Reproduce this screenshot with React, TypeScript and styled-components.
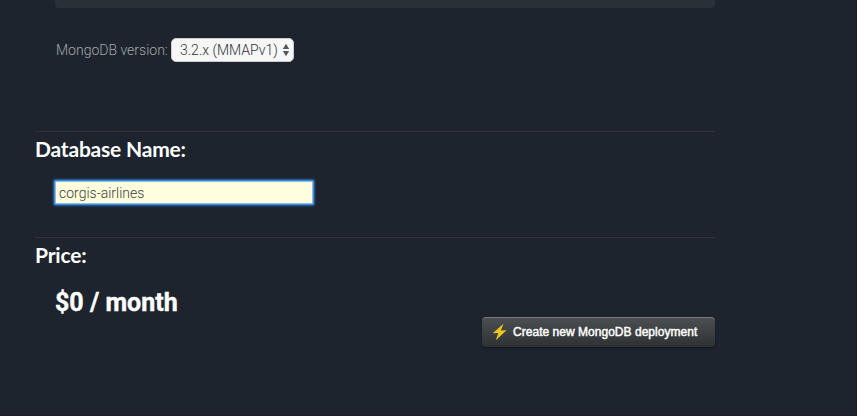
import React, { useState } from "react";
import styled, { createGlobalStyle } from "styled-components";

const GlobalStyle = createGlobalStyle`
  * { box-sizing: border-box; }
  body {
    margin: 0;
    background: #1d242d;
    font-family: Roboto, "Liberation Sans", sans-serif;
    overflow: hidden;
  }
`;

const Page = styled.main`
  height: 416px;
  width: 857px;
  padding-left: 35px;
  background: #1d242d;
  border-right: 1px solid #1b1e28;
  border-bottom: 1px solid #1b1e28;
`;

const Column = styled.form`
  width: 680px;
  display: flex;
  flex-direction: column;
`;

const PlanPanel = styled.div`
  height: 8px;
  margin-left: 20px;
  background: #293037;
  border-radius: 0 0 4px 4px;
`;

const VersionRow = styled.div`
  display: flex;
  align-items: center;
  height: 24px;
  margin: 30px 0 69px 21px;
`;

const VersionLabel = styled.label`
  width: 115px;
  color: #a0a8ac;
  font-size: 14px;
  font-weight: 300;
  line-height: 24px;
  white-space: nowrap;
`;

const VersionSelect = styled.button`
  display: flex;
  align-items: center;
  justify-content: space-between;
  width: 123px;
  height: 24px;
  padding: 0 3px 0 8px;
  border: 1px solid #c9cbcc;
  border-radius: 5px;
  background: #f7f7f7;
  color: #303336;
  font-family: inherit;
  font-size: 14px;
  font-weight: 300;
  line-height: 22px;
  white-space: nowrap;
`;

const Section = styled.section<{ $height: number }>`
  height: ${(p) => p.$height}px;
  border-top: 1px solid #30353a;
`;

const Heading = styled.h3`
  margin: 4px 0 0;
  color: #fff;
  font-family: Lato, sans-serif;
  font-size: 21px;
  font-weight: 700;
  line-height: 26px;
  letter-spacing: -0.2px;
`;

const NameInput = styled.input`
  display: block;
  width: 258px;
  height: 23px;
  margin: 19px 0 0 20px;
  padding: 0 4px 0 3px;
  border: 1px solid #8fbde8;
  border-radius: 1px;
  outline: none;
  background: #ffffdf;
  box-shadow: 0 0 1px 1px #438fdd, 0 0 2px 2px #28629f;
  color: #3c3c39;
  font-family: inherit;
  font-size: 14px;
  font-weight: 300;
`;

const Amount = styled.p`
  margin: 19px 0 0 20px;
  color: #fff;
  font-size: 25px;
  font-weight: 700;
  line-height: 32px;
  -webkit-text-stroke: 0.4px #fff;
`;

const CreateButton = styled.button`
  display: flex;
  align-items: center;
  align-self: flex-end;
  width: 233px;
  height: 30px;
  padding: 0 0 1px 10px;
  gap: 6px;
  border: 0;
  border-top: 1px solid #777b7e;
  border-radius: 4px;
  background: linear-gradient(#4b4f52, #2e3133);
  box-shadow: 0 1px 2px rgba(0, 0, 0, 0.4);
  color: #fff;
  font-family: "Liberation Sans", Arial, sans-serif;
  font-size: 12px;
  font-weight: 400;
  letter-spacing: 0.03px;
  -webkit-text-stroke: 0.45px #fff;
  white-space: nowrap;
`;

const StepArrows = () => (
  <svg width="8" height="14" viewBox="0 0 8 14" fill="#55585b" aria-hidden="true">
    <path d="M4 0.7 7.2 5.9H0.8ZM0.8 8.1H7.2L4 13.3Z" />
  </svg>
);

const Bolt = () => (
  <svg width="15" height="18" viewBox="0 0 15 18" fill="#edc51c" aria-hidden="true">
    <path d="M11.5 0.7 0.7 10.2 6.3 9.9 3.8 17.2 14.6 7.3 8.9 7.5Z" />
  </svg>
);

export default function App() {
  const [name, setName] = useState("corgis-airlines");
  return (
    <>
      <GlobalStyle />
      <Page>
        <Column onSubmit={(e) => e.preventDefault()}>
          <PlanPanel />
          <VersionRow>
            <VersionLabel htmlFor="version">MongoDB version:</VersionLabel>
            <VersionSelect id="version" type="button">
              3.2.x (MMAPv1)
              <StepArrows />
            </VersionSelect>
          </VersionRow>
          <Section $height={106}>
            <Heading>Database Name:</Heading>
            <NameInput
              aria-label="Database name"
              value={name}
              onChange={(e) => setName(e.target.value)}
            />
          </Section>
          <Section $height={80}>
            <Heading>Price:</Heading>
            <Amount>$0 / month</Amount>
          </Section>
          <CreateButton type="submit">
            <Bolt />
            Create new MongoDB deployment
          </CreateButton>
        </Column>
      </Page>
    </>
  );
}
